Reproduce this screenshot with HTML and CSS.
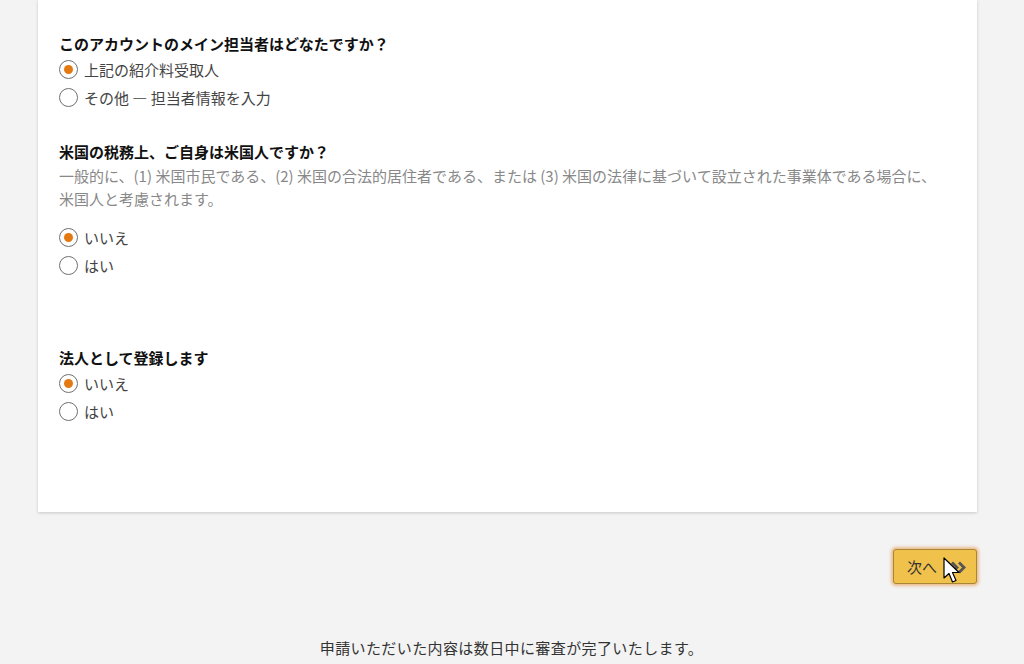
FILE: index.html
```html
<!DOCTYPE html>
<html lang="ja">
<head>
    <meta charset="UTF-8">
    <meta name="viewport" content="width=device-width, initial-scale=1.0">
    <title>紹介料受取人の登録</title>
    <link rel="stylesheet" href="styles.css">
</head>
<body>
    <div class="page">
        <div class="card">
            <div class="question">
                <div class="q-title">このアカウントのメイン担当者はどなたですか？</div>
                <label class="radio-row"><span class="radio checked"></span>上記の紹介料受取人</label>
                <label class="radio-row"><span class="radio"></span>その他 — 担当者情報を入力</label>
            </div>

            <div class="question q-tax">
                <div class="q-title">米国の税務上、ご自身は米国人ですか？</div>
                <p class="q-desc">一般的に、(1) 米国市民である、(2) 米国の合法的居住者である、または (3) 米国の法律に基づいて設立された事業体である場合に、<br>米国人と考慮されます。</p>
                <div class="options">
                    <label class="radio-row"><span class="radio checked"></span>いいえ</label>
                    <label class="radio-row"><span class="radio"></span>はい</label>
                </div>
            </div>

            <div class="question q-corp">
                <div class="q-title">法人として登録します</div>
                <label class="radio-row"><span class="radio checked"></span>いいえ</label>
                <label class="radio-row"><span class="radio"></span>はい</label>
            </div>
        </div>

        <div class="actions">
            <button class="next-button">次へ
                <svg class="chevrons" width="19" height="13" viewBox="0 0 19 13">
                    <path d="M3 1.5 L8 6.5 L3 11.5" fill="none" stroke="#555" stroke-width="2.8"/>
                    <path d="M10 1.5 L15 6.5 L10 11.5" fill="none" stroke="#555" stroke-width="2.8"/>
                </svg>
                <svg class="cursor" width="20" height="27" viewBox="0 0 20 27">
                    <path d="M1 1 L1 21 L6 16.5 L9.5 25 L13 23.5 L9.5 15.5 L16 15.5 Z" fill="#fff" stroke="#000" stroke-width="1.2" stroke-linejoin="round"/>
                </svg>
            </button>
        </div>

        <p class="footer-note">申請いただいた内容は数日中に審査が完了いたします。</p>
    </div>
</body>
</html>
```

FILE: styles.css
```css
body {
    margin: 0;
    background-color: #f3f3f3;
    font-family: "Noto Sans CJK JP", "Noto Sans", sans-serif;
    font-size: 15px;
    color: #333;
}
.page {
    width: 939px;
    margin-left: 38px;
}
.card {
    background-color: white;
    box-shadow: 0 1px 3px rgba(0, 0, 0, 0.18);
    padding: 33px 21px 87px 21px;
}
.q-title {
    font-weight: 700;
    color: #111;
    line-height: 22px;
}
.q-tax {
    margin-top: 30px;
}
.q-corp {
    margin-top: 68px;
}
.q-desc {
    margin: 1px 0 0 0;
    line-height: 23px;
    color: #888;
}
.options {
    margin-top: 13px;
}
.radio-row {
    display: flex;
    align-items: center;
    height: 28px;
    gap: 6px;
    color: #444;
}
.radio {
    width: 17px;
    height: 17px;
    border: 1.3px solid #707070;
    border-radius: 50%;
    background-color: white;
    display: flex;
    align-items: center;
    justify-content: center;
    flex-shrink: 0;
}
.radio.checked::after {
    content: "";
    width: 9px;
    height: 9px;
    border-radius: 50%;
    background-color: #e47911;
}
.actions {
    display: flex;
    justify-content: flex-end;
    margin-top: 37px;
}
.next-button {
    position: relative;
    display: flex;
    align-items: center;
    gap: 12px;
    height: 35px;
    width: 84px;
    padding: 0 0 0 13px;
    background-color: #f0c14b;
    border: 1px solid #a88734;
    border-radius: 3px;
    box-shadow: 0 0 3px 2px rgba(228, 121, 17, 0.45);
    font-family: inherit;
    font-size: 15px;
    color: #333;
    cursor: pointer;
}
.chevrons {
    flex-shrink: 0;
    margin-top: 1px;
}
.cursor {
    position: absolute;
    left: 49px;
    top: 7px;
}
.footer-note {
    margin: 53px 0 0 0;
    line-height: 22px;
    text-align: center;
    padding-left: 8px;
    letter-spacing: 0.4px;
}
```
